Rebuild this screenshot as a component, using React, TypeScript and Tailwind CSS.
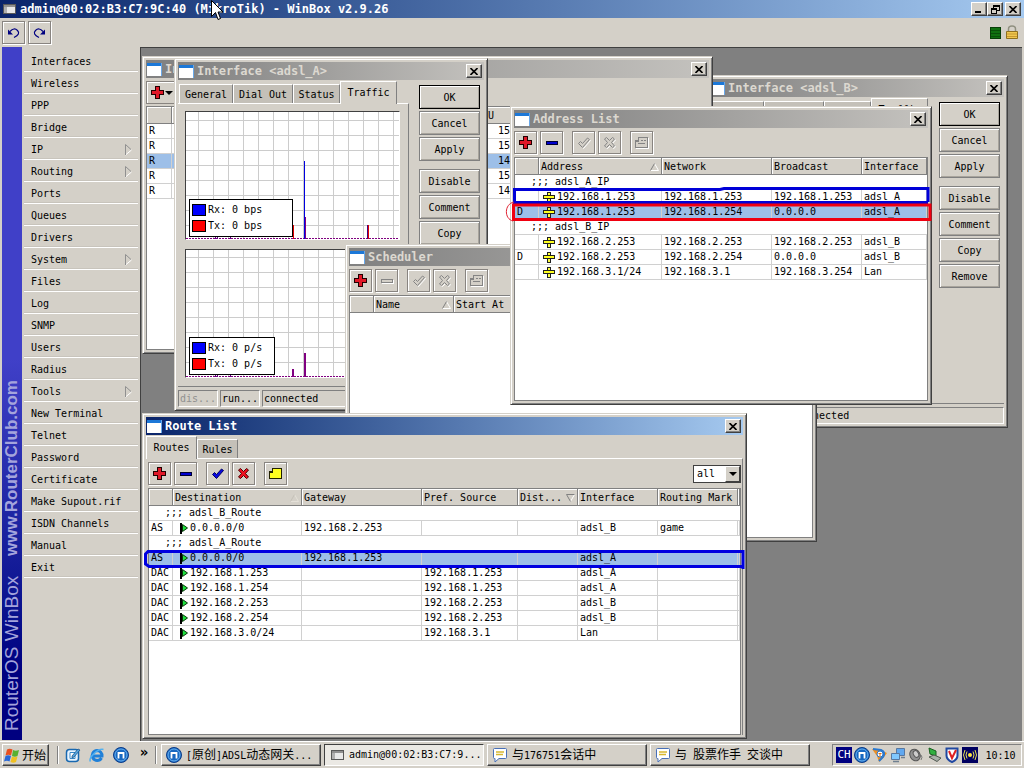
import React from "react";

type IconProps = { off?: boolean };

function PlusIcon() {
  return (
    <svg width="13" height="13" viewBox="0 0 13 13" shapeRendering="crispEdges" className="shrink-0">
      <path d="M4.500.500h4v4h4v4h-4v4h-4v-4h-4v-4h4z" fill="#e01828" stroke="#200000" />
    </svg>
  );
}

function MinusIcon({ off }: IconProps) {
  return (
    <svg width="14" height="13" viewBox="0 0 14 13" shapeRendering="crispEdges" className="shrink-0">
      {off && <path d="M2 9.500h11.500v-4" fill="none" stroke="#fff" />}
      <path d="M1.500 5.500h11v3h-11z" fill={off ? "#d4d0c8" : "#0000d0"} stroke={off ? "#848484" : "#000030"} />
    </svg>
  );
}

function CheckIcon({ off }: IconProps) {
  const d = "M1.500 7.500l2-2 2 2 5-5.500 2 1.500-7 8z";
  return (
    <svg width="14" height="13" viewBox="0 0 14 13" className="shrink-0">
      {off && <path d={d} transform="translate(1 1)" fill="none" stroke="#fff" />}
      <path d={d} fill={off ? "#d4d0c8" : "#0808e0"} stroke={off ? "#848484" : "#000060"} />
    </svg>
  );
}

function CrossIcon({ off }: IconProps) {
  const d = "M1.500 3l2-1.500 3 3 3-3 2 1.500-3 3.500 3 3.500-2 1.500-3-3-3 3-2-1.500 3-3.500z";
  return (
    <svg width="14" height="13" viewBox="0 0 14 13" className="shrink-0">
      {off && <path d={d} transform="translate(1 1)" fill="none" stroke="#fff" />}
      <path d={d} fill={off ? "#d4d0c8" : "#f01020"} stroke={off ? "#848484" : "#500000"} />
    </svg>
  );
}

function NoteIcon({ off }: IconProps) {
  return (
    <svg width="15" height="13" viewBox="0 0 15 13" shapeRendering="crispEdges" className="shrink-0">
      {off && <path d="M2 12.500h12.500V2" fill="none" stroke="#fff" />}
      <path
        d="M4.500 1.500h9v10h-12v-7h3z"
        fill={off ? "#d4d0c8" : "#ffff20"}
        stroke={off ? "#848484" : "#202000"}
      />
      <path d="M1.500 5.500h3v-4" fill="none" stroke={off ? "#848484" : "#202000"} />
      {off && <path d="M7 4.500h2m1 0h2M4 7.500h7" stroke="#848484" />}
    </svg>
  );
}

function AddressIcon() {
  return (
    <svg width="13" height="13" viewBox="0 0 13 13" shapeRendering="crispEdges" className="shrink-0">
      <path d="M4.500 1.500h3v10h-3z" fill="#ffff40" stroke="#202020" />
      <path d="M.500 4.500h11v3h-11z" fill="#ffff20" stroke="#202020" />
    </svg>
  );
}

function FlagIcon() {
  return (
    <svg width="9" height="12" viewBox="0 0 9 12" className="ml-[3px] shrink-0">
      <path d="M1 1v11" stroke="#000" strokeWidth="2" />
      <path d="M2.500 2.500l5 3.500-5 3.500z" fill="#20e040" stroke="#083808" />
    </svg>
  );
}

function SortMark({ kind }: { kind: "up" | "down" | "faint" }) {
  return (
    <svg width="9" height="8" viewBox="0 0 9 8" className="shrink-0">
      {kind === "down" ? (
        <>
          <path d="M8.500.500l-4 7" stroke="#fff" />
          <path d="M8.500.500h-8l4 7" fill="none" stroke="#808080" />
        </>
      ) : (
        <>
          <path d="M.500 7.500h8l-4-7" fill="none" stroke={kind === "faint" ? "#e4e0d8" : "#fff"} />
          <path d="M4.500.500l-4 7" stroke={kind === "faint" ? "#c4c0b8" : "#808080"} />
        </>
      )}
    </svg>
  );
}

function WindowIcon() {
  return (
    <svg width="15" height="13" viewBox="0 0 15 13" shapeRendering="crispEdges" className="shrink-0">
      <path d="M0 0h15v13H0z" fill="#fff" />
      <path d="M0 0h15v3H0z" fill="#1c78d8" />
      <path d="M14 0h1v13h-1z" fill="#6aa8e8" />
    </svg>
  );
}

function AppIcon() {
  return (
    <svg width="13" height="11" viewBox="0 0 13 11" shapeRendering="crispEdges" className="shrink-0">
      <path d="M.500.500h12v9h-12z" fill="#e8e8e8" stroke="#585858" />
      <path d="M1 1h11v2H1z" fill="#909090" />
      <path d="M1 3h3v6H1z" fill="#b0b0b0" />
    </svg>
  );
}

function CloseGlyph() {
  return (
    <svg width="8" height="7" viewBox="0 0 8 7">
      <path d="M.500 0l7 7M7.500 0l-7 7" stroke="#000" strokeWidth="1.600" />
    </svg>
  );
}

function CaptionButton({ label, children }: { label: string; children: React.ReactNode }) {
  return (
    <button
      aria-label={label}
      className="flex h-[14px] w-4 shrink-0 items-center justify-center border border-t-white border-l-white border-r-[#404040] border-b-[#404040] bg-[#d4d0c8] shadow-[inset_-1px_-1px_0_#808080]"
    >
      {children}
    </button>
  );
}

function DesktopWindow({
  title,
  active,
  place,
  children,
}: {
  title: string;
  active?: boolean;
  place: string;
  children: React.ReactNode;
}) {
  return (
    <section
      className={`absolute isolate flex flex-col overflow-hidden border border-t-[#d4d0c8] border-l-[#d4d0c8] border-r-[#404040] border-b-[#404040] bg-[#d4d0c8] p-[3px] shadow-[inset_1px_1px_0_#fff,inset_-1px_-1px_0_#808080] ${place}`}
    >
      <header
        className={`flex h-[18px] shrink-0 items-center gap-[3px] overflow-hidden bg-linear-to-r pl-px pr-[2px] ${
          active ? "from-[#0a246a] to-[#a6caf0] text-white" : "from-[#808080] to-[#c4c2be] text-[#dcd8d0]"
        }`}
      >
        <WindowIcon />
        <h2 className="min-w-0 flex-1 overflow-hidden text-[12px] leading-[16px] font-bold whitespace-nowrap">{title}</h2>
        <CaptionButton label={`Close ${title}`}>
          <CloseGlyph />
        </CaptionButton>
      </header>
      {children}
    </section>
  );
}

function ToolButton({ label, off, children }: { label: string; off?: boolean; children: React.ReactNode }) {
  return (
    <button
      aria-label={label}
      disabled={off}
      className="flex h-[23px] w-[23px] shrink-0 items-center justify-center border border-[#888480] bg-[#d4d0c8] shadow-[inset_1px_1px_0_#fff,1px_1px_0_#fff]"
    >
      {children}
    </button>
  );
}

function ToolRow({ mode }: { mode: "all" | "edit" | "add" }) {
  const off = mode !== "all";
  return (
    <div className="flex items-center gap-[3px]">
      <ToolButton label="Add">
        <PlusIcon />
      </ToolButton>
      <ToolButton label="Remove" off={mode === "add"}>
        <MinusIcon off={mode === "add"} />
      </ToolButton>
      <span className="w-[3px]" />
      <ToolButton label="Enable" off={off}>
        <CheckIcon off={off} />
      </ToolButton>
      <ToolButton label="Disable" off={off}>
        <CrossIcon off={off} />
      </ToolButton>
      <span className="w-[3px]" />
      <ToolButton label="Comment" off={off}>
        <NoteIcon off={off} />
      </ToolButton>
    </div>
  );
}

type Column = { name: string; width: string; sort?: "up" | "down" | "faint"; right?: boolean };
type Row = { comment?: string; cells?: string[]; selected?: boolean };

function Grid({ columns, rows, icon }: { columns: Column[]; rows: Row[]; icon?: React.ReactNode }) {
  return (
    <div className="min-h-0 flex-1 overflow-hidden border border-[#808080] bg-white">
      <table className="w-full table-fixed border-separate border-spacing-0 text-left text-[10px] leading-[14px]">
        <colgroup>
          {columns.map((c, i) => (
            <col key={i} className={c.width} />
          ))}
        </colgroup>
        <thead>
          <tr>
            {columns.map((c, i) => (
              <th
                key={i}
                className="h-[17px] overflow-hidden border-r border-b border-[#808080] bg-[#d4d0c8] p-0 font-normal shadow-[inset_1px_1px_0_#fff]"
              >
                <div className="flex items-center justify-between pt-px pr-[2px] pl-[2px] whitespace-nowrap">
                  <span>{c.name}</span>
                  {c.sort && <SortMark kind={c.sort} />}
                </div>
              </th>
            ))}
          </tr>
        </thead>
        <tbody>
          {rows.map((r, i) =>
            r.comment ? (
              <tr key={i}>
                <td colSpan={columns.length} className="h-[15px] border-b border-[#d0d0d0] p-0 pl-4 whitespace-pre">
                  {";;; " + r.comment}
                </td>
              </tr>
            ) : (
              <tr key={i} className={r.selected ? "bg-[#9dbfe8]" : ""}>
                {columns.map((c, j) => (
                  <td key={j} className="h-[15px] overflow-hidden border-r border-b border-[#d0d0d0] p-0 whitespace-nowrap">
                    <div
                      className={`flex h-[14px] items-center gap-px ${
                        c.right ? "justify-end pr-px" : j === 1 && icon ? "pl-1" : "pl-[2px]"
                      }`}
                    >
                      {j === 1 && icon}
                      {r.cells?.[j] ?? ""}
                    </div>
                  </td>
                ))}
              </tr>
            )
          )}
        </tbody>
      </table>
    </div>
  );
}

function Legend({ unit, size }: { unit: string; size: string }) {
  return (
    <div
      className={`absolute bottom-[2px] left-[3px] flex flex-col justify-center gap-[2px] border border-black bg-white pl-[2px] text-[10px] leading-[14px] ${size}`}
    >
      {[
        ["Rx", "bg-[#0000ff]"],
        ["Tx", "bg-[#ff0000]"],
      ].map(([name, color]) => (
        <div key={name} className="flex items-center gap-[2px] whitespace-pre">
          <span className={`h-3 w-[14px] border border-black ${color}`} />
          {`${name}: 0 ${unit}`}
        </div>
      ))}
    </div>
  );
}

function Chart({ kind }: { kind: "bits" | "packets" }) {
  const bits = kind === "bits";
  const top = bits ? 8 : 7;
  return (
    <div className="relative h-[129px] shrink-0 overflow-hidden border border-t-[#404040] border-l-[#404040] border-r-white border-b-white bg-white">
      <svg width="213" height="127" viewBox="0 0 213 127" shapeRendering="crispEdges">
        {Array.from({ length: 14 }, (_, i) => (
          <path key={"v" + i} d={`M${12 + i * 15 + 0.5} 0v127`} stroke="#cccccc" />
        ))}
        {Array.from({ length: 8 }, (_, i) => (
          <path key={"h" + i} d={`M0 ${top + i * 15 + 0.5}h213`} stroke="#cccccc" />
        ))}
        <path d="M0 126.500h213" stroke="#800080" strokeDasharray="2 1" />
        <path d="M29 123v4M31.500 124v3M44 123v4" stroke="#600080" />
        {bits ? (
          <>
            <path d="M118.500 49v78" stroke="#0000e0" />
            <path d="M119.500 105v22" stroke="#800080" />
            <path d="M107.500 113v14M182.500 113v14" stroke="#e00000" />
            <path d="M181.500 113v14" stroke="#400080" />
          </>
        ) : (
          <path d="M119 103v24M107 119v8" stroke="#800080" strokeWidth="2" />
        )}
      </svg>
      <Legend unit={bits ? "bps" : "p/s"} size={bits ? "h-[38px] w-[104px]" : "h-[38px] w-[86px]"} />
    </div>
  );
}

function SideButton({ name }: { name: string }) {
  return (
    <button
      className={`h-6 w-[61px] border bg-[#d4d0c8] pt-[2px] text-[10px] leading-[14px] ${
        name === "OK" ? "border-black" : "border-[#808080]"
      } ${name === "Disable" ? "mt-[6px]" : ""} shadow-[inset_1px_1px_0_#fff,inset_-1px_-1px_0_#a8a49c]`}
    >
      {name}
    </button>
  );
}

function Tab({ name, active, width }: { name: string; active?: boolean; width: string }) {
  return (
    <button
      role="tab"
      aria-selected={!!active}
      className={`flex items-center justify-center border-t border-l border-r border-t-white border-l-white border-r-[#808080] text-[10px] leading-[14px] ${width} ${
        active ? "z-10 -mb-px h-[23px] bg-[#d4d0c8]" : "h-[19px] bg-[#c4c0b8] pt-px"
      }`}
    >
      {name}
    </button>
  );
}

function StatusBox({ className, children }: { className: string; children: React.ReactNode }) {
  return (
    <span
      className={`h-[17px] overflow-hidden border border-t-[#808080] border-l-[#808080] border-r-white border-b-white px-px leading-4 whitespace-nowrap ${className}`}
    >
      {children}
    </span>
  );
}

function InterfaceWindow({ name, place, children }: { name: string; place: string; children?: React.ReactNode }) {
  return (
    <DesktopWindow title={`Interface <${name}>`} place={place}>
      <div className="flex min-h-0 flex-1 gap-[10px] pr-1">
        <div className="flex min-w-0 flex-1 flex-col">
          <div role="tablist" className="flex h-[23px] shrink-0 items-end pl-px">
            <Tab name="General" width="w-[54px]" />
            <Tab name="Dial Out" width="w-[60px]" />
            <Tab name="Status" width="w-[47px]" />
            <Tab name="Traffic" active width="w-[57px]" />
          </div>
          <div className="flex min-h-0 flex-1 flex-col gap-[9px] overflow-hidden border-t border-r border-t-white border-r-[#808080] pt-[7px] pr-[8px] pl-[7px]">
            {children}
          </div>
        </div>
        <div className="flex shrink-0 flex-col gap-[2px] overflow-hidden pt-[5px]">
          {["OK", "Cancel", "Apply", "Disable", "Comment", "Copy", "Remove"].map((b) => (
            <SideButton key={b} name={b} />
          ))}
        </div>
      </div>
      <footer className="flex shrink-0 gap-[2px] border-t border-[#808080] pt-[3px] text-[10px]">
        <StatusBox className="w-10 text-[#909090]">dis...</StatusBox>
        <StatusBox className="w-10">run...</StatusBox>
        <StatusBox className="flex-1">connected</StatusBox>
      </footer>
    </DesktopWindow>
  );
}

const interfaceRows: Row[] = ["1500", "1500", "1480", "1500", "1480"].map((mtu, i) => ({
  cells: ["R", "", mtu, ""],
  selected: i === 2,
}));

const addressRows: Row[] = [
  { comment: "adsl_A_IP" },
  { cells: ["", "192.168.1.253", "192.168.1.253", "192.168.1.253", "adsl_A"] },
  { cells: ["D", "192.168.1.253", "192.168.1.254", "0.0.0.0", "adsl_A"], selected: true },
  { comment: "adsl_B_IP" },
  { cells: ["", "192.168.2.253", "192.168.2.253", "192.168.2.253", "adsl_B"] },
  { cells: ["D", "192.168.2.253", "192.168.2.254", "0.0.0.0", "adsl_B"] },
  { cells: ["", "192.168.3.1/24", "192.168.3.1", "192.168.3.254", "Lan"] },
];

const routeRows: Row[] = [
  { comment: "adsl_B_Route" },
  { cells: ["AS", "0.0.0.0/0", "192.168.2.253", "", "", "adsl_B", "game"] },
  { comment: "adsl_A_Route" },
  { cells: ["AS", "0.0.0.0/0", "192.168.1.253", "", "", "adsl_A", ""], selected: true },
  { cells: ["DAC", "192.168.1.253", "", "192.168.1.253", "", "adsl_A", ""] },
  { cells: ["DAC", "192.168.1.254", "", "192.168.1.253", "", "adsl_A", ""] },
  { cells: ["DAC", "192.168.2.253", "", "192.168.2.253", "", "adsl_B", ""] },
  { cells: ["DAC", "192.168.2.254", "", "192.168.2.253", "", "adsl_B", ""] },
  { cells: ["DAC", "192.168.3.0/24", "", "192.168.3.1", "", "Lan", ""] },
];

const menu = [
  "Interfaces", "Wireless", "PPP", "Bridge", "IP", "Routing", "Ports", "Queues", "Drivers", "System", "Files", "Log",
  "SNMP", "Users", "Radius", "Tools", "New Terminal", "Telnet", "Password", "Certificate", "Make Supout.rif",
  "ISDN Channels", "Manual", "Exit",
];
const submenus = ["IP", "Routing", "System", "Tools"];

function SideMenu() {
  return (
    <nav className="flex w-[140px] shrink-0 pl-[2px]">
      <div className="flex w-5 shrink-0 items-start justify-center overflow-hidden bg-linear-to-b from-[#4040c8] from-45% to-[#000080] to-90%">
        <div className="flex h-full rotate-180 items-center pt-[10px] font-['Liberation_Sans',sans-serif] leading-5 whitespace-nowrap text-[#a4a4dc] [writing-mode:vertical-rl]">
          <span className="text-[19px]">RouterOS WinBox</span>
          <span className="mt-5 text-[17px] font-bold">www.RouterClub.com</span>
        </div>
      </div>
      <ul className="flex-1 px-[2px] pt-[3px]">
        {menu.map((m) => (
          <li key={m}>
            <button className="flex h-[22px] w-full items-center justify-between border-b border-white pt-[2px] pr-[6px] pl-[7px] text-[10px] leading-[14px] whitespace-nowrap shadow-[inset_0_-1px_0_#c8c4bc]">
              {m}
              {submenus.includes(m) && (
                <svg width="8" height="12" viewBox="0 0 8 12">
                  <path d="M1.500 11l6-5" stroke="#fff" />
                  <path d="M7 5.500L1.500.500v10.500" fill="none" stroke="#909090" />
                </svg>
              )}
            </button>
          </li>
        ))}
      </ul>
    </nav>
  );
}

function Desktop() {
  return (
    <main className="relative mr-[2px] min-w-0 flex-1 overflow-hidden bg-[#808080] shadow-[inset_1px_1px_0_#404040]">
      <InterfaceWindow name="adsl_B" place="left-[565px] top-[28px] h-[353px] w-[303px]" />

      <DesktopWindow title="Interface List" place="left-[2px] top-[9px] h-[298px] w-[571px]">
        <div className="flex h-7 shrink-0 items-start pt-[3px]">
          <button
            aria-label="Add interface"
            className="flex h-[23px] w-8 items-center justify-center gap-px border border-[#888480] shadow-[inset_1px_1px_0_#fff]"
          >
            <PlusIcon />
            <svg width="8" height="4" viewBox="0 0 8 4">
              <path d="M0 0h8L4 4z" />
            </svg>
          </button>
        </div>
        <Grid
          columns={[
            { name: "", width: "w-[25px]" },
            { name: "", width: "w-[302px]" },
            { name: "MTU", width: "w-[50px]", right: true },
            { name: "", width: "" },
          ]}
          rows={interfaceRows}
        />
      </DesktopWindow>

      <InterfaceWindow name="adsl_A" place="left-[34px] top-[11px] h-[353px] w-[314px]">
        <Chart kind="bits" />
        <Chart kind="packets" />
      </InterfaceWindow>

      <DesktopWindow title="Scheduler" place="left-[205px] top-[197px] h-[298px] w-[472px]">
        <div className="shrink-0 py-[3px]">
          <ToolRow mode="add" />
        </div>
        <Grid
          columns={[
            { name: "", width: "w-[24px]" },
            { name: "Name", width: "w-[80px]", sort: "up" },
            { name: "Start At", width: "" },
          ]}
          rows={[]}
        />
      </DesktopWindow>

      <DesktopWindow title="Address List" place="left-[370px] top-[59px] h-[299px] w-[422px]">
        <div className="shrink-0 py-[3px]">
          <ToolRow mode="edit" />
        </div>
        <Grid
          columns={[
            { name: "", width: "w-[24px]" },
            { name: "Address", width: "w-[123px]", sort: "up" },
            { name: "Network", width: "w-[110px]" },
            { name: "Broadcast", width: "w-[90px]" },
            { name: "Interface", width: "" },
          ]}
          rows={addressRows}
          icon={<AddressIcon />}
        />
      </DesktopWindow>

      <DesktopWindow title="Route List" active place="left-[2px] top-[366px] h-[326px] w-[605px]">
        <div role="tablist" className="flex h-[23px] shrink-0 items-end">
          <Tab name="Routes" active width="w-[51px]" />
          <Tab name="Rules" width="w-[41px]" />
        </div>
        <div className="flex min-h-0 flex-1 flex-col border-t border-r border-t-white border-r-[#808080] pt-[3px] pr-px pl-[2px]">
          <div className="flex shrink-0 items-center justify-between pb-[3px]">
            <ToolRow mode="all" />
            <div className="relative">
              <select
                aria-label="Filter"
                className="block h-[18px] w-12 appearance-none border border-[#404040] bg-white pl-[3px] text-[10px] leading-[14px]"
              >
                <option>all</option>
              </select>
              <span className="pointer-events-none absolute top-px right-px flex h-4 w-[15px] items-center justify-center border border-t-white border-l-white border-r-[#404040] border-b-[#404040] bg-[#d4d0c8]">
                <svg width="8" height="4" viewBox="0 0 8 4">
                  <path d="M0 0h8L4 4z" />
                </svg>
              </span>
            </div>
          </div>
          <Grid
            columns={[
              { name: "", width: "w-[24px]" },
              { name: "Destination", width: "w-[129px]", sort: "faint" },
              { name: "Gateway", width: "w-[120px]" },
              { name: "Pref. Source", width: "w-[96px]" },
              { name: "Dist...", width: "w-[60px]", sort: "down" },
              { name: "Interface", width: "w-[80px]" },
              { name: "Routing Mark", width: "w-[80px]" },
              { name: "", width: "" },
            ]}
            rows={routeRows}
            icon={<FlagIcon />}
          />
        </div>
      </DesktopWindow>

      <svg className="pointer-events-none absolute top-[138px] left-[364px]" width="430" height="40" viewBox="0 0 430 40">
        <path d="M9 4.500H216l4-1H424V17M424 17.500H10.500V4" fill="none" stroke="#0000d8" strokeWidth="3" />
        <path d="M9.500 20H426V34.500H9.500z" fill="none" stroke="#f00010" strokeWidth="3" />
        <path d="M10 17C0 19 0 34 9 36" fill="none" stroke="#e02030" />
      </svg>
      <svg className="pointer-events-none absolute top-[501px] left-[3px]" width="604" height="24" viewBox="0 0 604 24">
        <path d="M600 3.500H5L2.500 6v10L6 18.500H600M600 2v19" fill="none" stroke="#0000e0" strokeWidth="3" />
      </svg>
    </main>
  );
}

function Han({ children }: { children: React.ReactNode }) {
  return <span className="font-['Noto_Sans_CJK_SC',sans-serif] text-[12px]">{children}</span>;
}

function MaxthonIcon() {
  return (
    <svg width="16" height="16" viewBox="0 0 16 16" className="shrink-0">
      <circle cx="8" cy="8" r="7.500" fill="#1868c0" stroke="#0c3c88" />
      <circle cx="8" cy="8" r="6" fill="none" stroke="#68b0f0" />
      <path d="M5.500 11.500V6h5v5.500" fill="none" stroke="#fff" strokeWidth="1.800" />
    </svg>
  );
}

function ChatIcon() {
  return (
    <svg width="16" height="16" viewBox="0 0 16 16" className="shrink-0">
      <path
        d="M2.500 1.500h11a1 1 0 011 1v8a1 1 0 01-1 1H7l-4 3.500v-3.500h-.500a1 1 0 01-1-1v-8a1 1 0 011-1z"
        fill="#fff"
        stroke="#4870b8"
      />
      <path d="M4 5h8M4 7.500h7" stroke="#d8b830" strokeWidth="1.500" />
    </svg>
  );
}

function TaskButton({ icon, pressed, children }: { icon: React.ReactNode; pressed?: boolean; children: React.ReactNode }) {
  return (
    <button
      className={`flex h-[22px] w-40 min-w-0 items-center gap-1 overflow-hidden border px-1 text-[10px] leading-4 whitespace-pre ${
        pressed
          ? "border-t-[#404040] border-l-[#404040] border-r-white border-b-white bg-[#ebe9e4]"
          : "border-t-white border-l-white border-r-[#404040] border-b-[#404040] shadow-[inset_-1px_-1px_0_#808080]"
      }`}
    >
      <span className="flex w-4 shrink-0 justify-center">{icon}</span>
      <span>{children}</span>
    </button>
  );
}

function Divider() {
  return <span className="h-[18px] w-[2px] shrink-0 border-l border-r border-l-[#808080] border-r-white" />;
}

function Taskbar() {
  return (
    <footer className="flex h-[27px] shrink-0 items-center border-t border-white bg-[#d4d0c8] pr-[2px] pl-[2px] text-[10px] shadow-[0_-1px_0_#d4d0c8]">
      <button className="flex h-[22px] w-[47px] shrink-0 items-center gap-[2px] border border-t-white border-l-white border-r-[#404040] border-b-[#404040] pl-px shadow-[inset_-1px_-1px_0_#808080]">
        <svg width="16" height="15" viewBox="0 0 16 15" className="shrink-0">
          <path d="M3 1.500q2.500-1.500 5.500 0L7 7.500q-2.500-1.500-5.500 0z" fill="#e85020" />
          <path d="M9 2q2.500 1.500 6 0L13.500 8q-2.500 1.500-5.500 0z" fill="#58b030" />
          <path d="M1.500 8q2.500-1.500 5.500 0l-1.500 5.500Q3 12 0 13.500z" fill="#2868d8" />
          <path d="M8 8.500q2.500 1.500 5.500 0L12 14q-2.500 1.500-5.500 0z" fill="#f0c020" />
        </svg>
        <Han>开始</Han>
      </button>
      <span className="w-2 shrink-0" />
      <Divider />
      <div className="flex shrink-0 items-center gap-2 pl-[6px]">
        <a href="#desktop" aria-label="Show desktop">
          <svg width="16" height="16" viewBox="0 0 16 16">
            <rect x="1.500" y="2.500" width="12" height="12" rx="3" fill="#e8f4ff" stroke="#1868b0" strokeWidth="1.500" />
            <path d="M5 5.500h5v6H5z" fill="#fff" stroke="#3888c8" />
            <path d="M7 9l6-7 2 1-6 7-2 1z" fill="#58a8e0" stroke="#104880" strokeWidth=".700" />
          </svg>
        </a>
        <a href="#browser" aria-label="Internet Explorer">
          <svg width="16" height="16" viewBox="0 0 16 16">
            <path d="M12.500 11A5 5 0 118 3.500a5 5 0 015 5.500H4" fill="none" stroke="#2080d8" strokeWidth="3" />
            <path d="M1.500 14.500C-1 11 9 1 14.500 2.500" fill="none" stroke="#50b0f0" strokeWidth="1.500" />
          </svg>
        </a>
        <a href="#maxthon" aria-label="Maxthon">
          <MaxthonIcon />
        </a>
      </div>
      <span className="w-[26px] shrink-0 pb-[6px] pl-1 text-center text-[14px] leading-4 font-bold">»</span>
      <Divider />
      <div className="flex min-w-0 flex-1 gap-[3px] pl-1">
        <TaskButton icon={<MaxthonIcon />}>
          [<Han>原创</Han>]ADSL<Han>动态网关</Han>...
        </TaskButton>
        <TaskButton icon={<AppIcon />} pressed>
          admin@00:02:B3:C7:9...
        </TaskButton>
        <TaskButton icon={<ChatIcon />}>
          <Han>与</Han>176751<Han>会话中</Han>
        </TaskButton>
        <TaskButton icon={<ChatIcon />}>
          <Han>与</Han> <Han>股票作手</Han> <Han>交谈中</Han>
        </TaskButton>
      </div>
      <div className="flex h-[22px] w-[190px] shrink-0 items-center gap-[2px] border border-t-[#808080] border-l-[#808080] border-r-white border-b-white pl-[3px]">
        <span className="flex h-4 w-4 items-center justify-center bg-[#000080] text-[11px] leading-4 text-white">CH</span>
        <MaxthonIcon />
        <svg width="16" height="16" viewBox="0 0 16 16">
          <path d="M0 2l9 1 6 3-3 4-5 5-2-6z" fill="#f09020" />
          <path d="M1 2l8 1q5 2 2 7l-4 4" fill="none" stroke="#2878d0" strokeWidth="2" />
          <circle cx="8" cy="7" r="3" fill="#fff" stroke="#2878d0" />
          <path d="M6.500 6.500h3M8 6.500v3" stroke="#e07010" />
        </svg>
        <svg width="16" height="16" viewBox="0 0 16 16">
          <path d="M6.500 1.500h8v7h-8z" fill="#60a8f0" stroke="#5878a0" />
          <path d="M1.500 6.500h8v6h-8z" fill="#80c8ff" stroke="#5878a0" />
          <path d="M3 14.500h6M11 10.500h4" stroke="#708090" strokeWidth="1.500" />
        </svg>
        <svg width="16" height="16" viewBox="0 0 16 16">
          <ellipse cx="7" cy="8" rx="5" ry="6" transform="rotate(-30 7 8)" fill="#909090" stroke="#555" />
          <ellipse cx="8" cy="7" rx="2.500" ry="3.500" transform="rotate(-30 8 7)" fill="#ccc" stroke="#555" />
          <path d="M13 8q2 2 0 5" fill="none" stroke="#777" />
        </svg>
        <svg width="16" height="16" viewBox="0 0 16 16">
          <path d="M3 1l7 3v5L4 7z" fill="#30b040" stroke="#186020" />
          <path d="M3 10l5-2 7 3-4 3.500z" fill="#a8b0a8" stroke="#505850" />
        </svg>
        <svg width="16" height="16" viewBox="0 0 16 16">
          <path d="M2.500 1.500h11v7q0 4-5.500 6.500Q2.500 12.500 2.500 8.500z" fill="#fff" stroke="#2048a0" strokeWidth="2" />
          <path d="M5 4l3 7 4-8" fill="none" stroke="#e02020" strokeWidth="2" />
        </svg>
        <svg width="16" height="16" viewBox="0 0 16 16">
          <path d="M0 0h16v16H0z" fill="#000060" />
          <circle cx="8" cy="8" r="2" fill="#ffe840" />
          <path d="M5 4.500q-2 3.500 0 7M11 4.500q2 3.500 0 7M3 3q-3 5 0 10M13 3q3 5 0 10" fill="none" stroke="#e8e050" />
        </svg>
        <time className="flex-1 text-center">10:10</time>
      </div>
    </footer>
  );
}

export default function App() {
  return (
    <div className="relative flex h-screen w-full flex-col overflow-hidden bg-[#d4d0c8] font-['DejaVu_Sans_Mono','Noto_Sans_CJK_SC',monospace] text-black">
      <header className="flex h-[18px] shrink-0 items-center gap-1 bg-linear-to-r from-[#0a246a] to-[#a6caf0] pr-[3px] pl-[3px] text-white">
        <AppIcon />
        <h1 className="flex-1 text-[12px] leading-4 font-bold whitespace-nowrap">
          admin@00:02:B3:C7:9C:40 (MikroTik) - WinBox v2.9.26
        </h1>
        <div className="flex">
          <CaptionButton label="Minimize">
            <svg width="8" height="7" viewBox="0 0 8 7">
              <path d="M0 6h6" stroke="#000" strokeWidth="2" />
            </svg>
          </CaptionButton>
          <CaptionButton label="Restore">
            <svg width="9" height="9" viewBox="0 0 9 9" shapeRendering="crispEdges">
              <path d="M2.500 3V.500h6v5H6M3 1.500h5M.500 3.500h5v5h-5zM1 4.500h4" fill="none" stroke="#000" />
            </svg>
          </CaptionButton>
          <span className="w-[2px]" />
          <CaptionButton label="Close">
            <CloseGlyph />
          </CaptionButton>
        </div>
      </header>

      <div className="flex h-[29px] shrink-0 items-center gap-[3px] pr-[5px] pl-[2px]">
        <ToolButton label="Undo">
          <svg width="13" height="12" viewBox="0 0 13 12">
            <path d="M3 4.500Q7 0 10.500 3.500T7 10.500" fill="none" stroke="#000080" strokeWidth="1.200" />
            <path d="M1 2.500v5h5z" fill="#000080" />
          </svg>
        </ToolButton>
        <ToolButton label="Redo">
          <svg width="13" height="12" viewBox="0 0 13 12">
            <path d="M10 4.500Q6 0 2.500 3.500T6 10.500" fill="none" stroke="#000080" strokeWidth="1.200" />
            <path d="M12 2.500v5H7z" fill="#000080" />
          </svg>
        </ToolButton>
        <span className="flex-1" />
        <svg width="12" height="12" viewBox="0 0 12 12" shapeRendering="crispEdges">
          <path d="M.500.500h10v11h-10z" fill="#107010" stroke="#084008" />
          <path d="M1 3.500h9M1 6.500h9M1 9.500h9" stroke="#0a500a" />
        </svg>
        <svg width="14" height="15" viewBox="0 0 14 15">
          <path d="M3.500 7V4a3.500 3 0 017 0v3" fill="none" stroke="#909080" strokeWidth="1.500" />
          <path d="M1.500 6.500h11v7h-11z" fill="#f0c850" stroke="#907020" />
          <path d="M2 9h10M2 11.500h10" stroke="#c89830" />
        </svg>
      </div>

      <div className="flex min-h-0 flex-1">
        <SideMenu />
        <Desktop />
      </div>
      <Taskbar />

      <svg className="pointer-events-none absolute top-0 left-[211px]" width="13" height="21" viewBox="0 0 13 21">
        <path d="M.500.500v16l4-4 2.500 7 2.500-1-2.500-6.500h5z" fill="#fff" stroke="#000" />
      </svg>
    </div>
  );
}
